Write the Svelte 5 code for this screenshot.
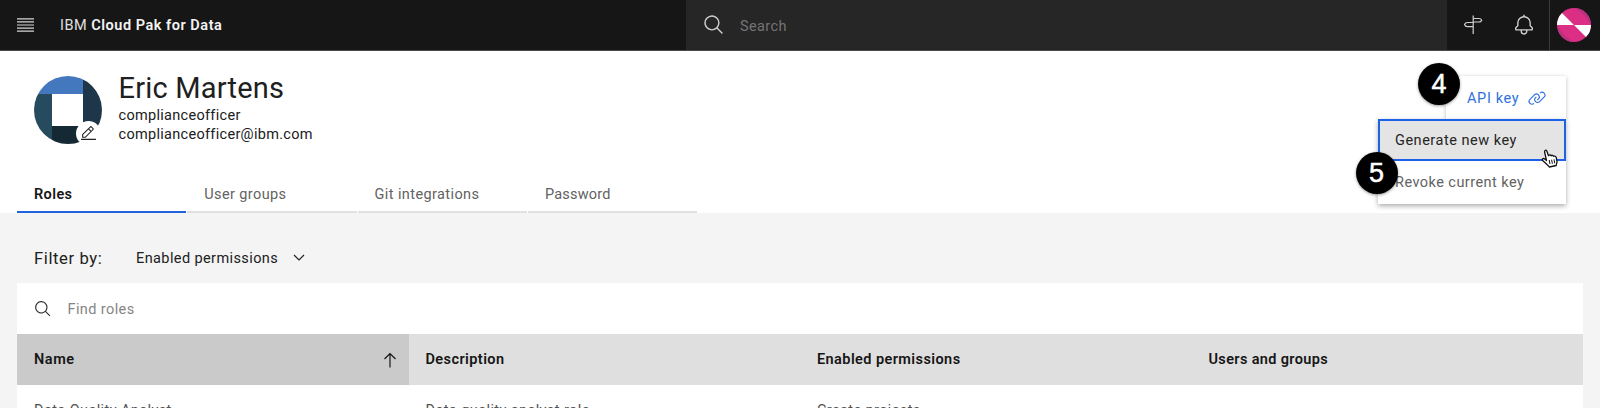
<script>
  const tabs = [
    { label: 'Roles', active: true, track: 0.4 },
    { label: 'User groups', track: 0.39 },
    { label: 'Git integrations', track: 0.4 },
    { label: 'Password', track: 0.22 }
  ];
  const columns = [
    { label: 'Name', cell: 'Data Quality Analyst', sorted: true, track: 0.55, cellTrack: 0.4 },
    { label: 'Description', cell: 'Data quality analyst role', track: 0.42, cellTrack: 0.4 },
    { label: 'Enabled permissions', cell: 'Create projects', track: 0.42, cellTrack: 0.38 },
    { label: 'Users and groups', cell: '', track: 0.35, cellTrack: 0 }
  ];
</script>

{#snippet searchIcon(size)}
  <svg width={size} height={size} viewBox="0 0 32 32" fill="currentColor"><path d="M29,27.5859l-7.5521-7.5521a11.0177,11.0177,0,1,0-1.4141,1.4141L27.5859,29ZM4,13a9,9,0,1,1,9,9A9.01,9.01,0,0,1,4,13Z" /></svg>
{/snippet}

<div class="page">
  <header>
    <div class="brand">
      <svg width="17" height="14" viewBox="0 0 17 14" stroke="#d6d6d6" stroke-width="1.2"><path d="M0 .8h17M0 3.9h17M0 7h17M0 10.1h17M0 13.2h17" /></svg>
      <span class="title">IBM <b>Cloud Pak for Data</b></span>
    </div>
    <div class="search">{@render searchIcon(22)}<span>Search</span></div>
    <div class="tool">
      <svg width="20" height="20" viewBox="0 0 20 20" fill="none" stroke="currentColor" stroke-width="1.200"><path d="M10.200 .5v18.500M10.200 3.500h5.800q2 0 2.700 1.700-.7 1.800-2.700 1.800h-5.800M10.200 7.500H4.500q-2.200 0-3 2 .8 2.200 3 2.200h5.700" /></svg>
    </div>
    <div class="tool">
      <svg width="22" height="22" viewBox="0 0 32 32" fill="currentColor"><path d="M28.7071,19.293,26,16.5859V13a10.0136,10.0136,0,0,0-9-9.9492V1H15V3.0508A10.0136,10.0136,0,0,0,6,13v3.5859L3.2929,19.293A1,1,0,0,0,3,20v3a1,1,0,0,0,1,1h7v.7768a5.152,5.152,0,0,0,4.5,5.1987A5.0057,5.0057,0,0,0,21,25V24h7a1,1,0,0,0,1-1V20A1,1,0,0,0,28.7071,19.293ZM19,25a3,3,0,0,1-6,0V24h6Zm8-3H5V20.4141L7.707,17.707A1,1,0,0,0,8,17V13a8,8,0,0,1,16,0v4a1,1,0,0,0,.293.707L27,20.4141Z" /></svg>
    </div>
    <div class="account">
      <svg width="34" height="34" viewBox="0 0 34 34"><circle cx="17" cy="17" r="17" fill="#da2f84" /><path d="M17 0A17 17 0 0 1 34 17Q27 4 17 0ZM0 17A17 17 0 0 0 17 34Q6 28 0 17Z" fill="#b83280" /><path d="M17 17H0A17 17 0 0 1 5 5ZM17 17H34A17 17 0 0 1 29 29Z" fill="#fff" /></svg>
    </div>
  </header>

  <section class="profile">
    <div class="person">
      <div class="avatar">
        <svg width="68" height="68" viewBox="0 0 68 68">
          <clipPath id="disc"><circle cx="34" cy="34" r="34" /></clipPath>
          <g clip-path="url(#disc)">
            <rect width="68" height="68" fill="#fff" />
            <rect width="49" height="18" fill="#4478be" />
            <rect y="18" width="18" height="50" fill="#264a5e" />
            <rect x="49" width="19" height="68" fill="#1e364a" />
            <rect x="18" y="50" width="31" height="18" fill="#152934" />
          </g>
        </svg>
        <span class="edit"><svg width="17" height="17" viewBox="0 0 32 32" fill="#222"><path d="M2 26h28v2H2zM25.4 9c.8-.8.8-2 0-2.800l-3.600-3.600c-.8-.8-2-.8-2.800 0l-15 15V24h6.400l15-15zM20.400 4L24 7.600l-3 3L17.400 7l3-3zM6 22v-3.600l10-10 3.600 3.600-10 10H6z" /></svg></span>
      </div>
      <div class="who">
        <h1>Eric Martens</h1>
        <p>complianceofficer</p>
        <p>complianceofficer@ibm.com</p>
      </div>
    </div>
    <nav>
      {#each tabs as tab}
        <span class="tab" class:active={tab.active} style="letter-spacing: {tab.track}px">{tab.label}</span>
      {/each}
    </nav>
  </section>

  <main>
    <div class="filter">
      <span class="by">Filter by:</span>
      <span class="pick">Enabled permissions</span>
      <svg width="12" height="8" viewBox="0 0 12 8" fill="none" stroke="#222" stroke-width="1.2"><path d="M1 1l5 5 5-5" /></svg>
    </div>
    <div class="table">
      <div class="find">{@render searchIcon(18)}<span>Find roles</span></div>
      <div class="row head">
        {#each columns as col}
          <span class:sorted={col.sorted} style="letter-spacing: {col.track}px">{col.label}
            {#if col.sorted}<svg width="14" height="16" viewBox="0 0 14 16" fill="none" stroke="#161616" stroke-width="1.2"><path d="M7 15.500V1.500M1.500 7L7 1.500 12.500 7" /></svg>{/if}
          </span>
        {/each}
      </div>
      <div class="row body">
        {#each columns as col}
          <span style="letter-spacing: {col.cellTrack}px">{col.cell}</span>
        {/each}
      </div>
    </div>
  </main>

  <div class="menu">
    <div class="api">
      <span>API key</span>
      <svg width="18" height="18" viewBox="0 0 32 32" fill="currentColor"><path d="M29.250 6.760a6 6 0 0 0-8.500 0l1.420 1.420a4 4 0 1 1 5.670 5.670l-8 8a4 4 0 1 1-5.670-5.660l1.410-1.420-1.410-1.420-1.420 1.420a6 6 0 0 0 0 8.500A6 6 0 0 0 17 25a6 6 0 0 0 4.270-1.760l8-8a6 6 0 0 0-.02-8.480z" /><path d="M4.190 24.820a4 4 0 0 1 0-5.670l8-8a4 4 0 0 1 5.670 0A3.940 3.940 0 0 1 19 14a4 4 0 0 1-1.170 2.850L15.710 19l1.420 1.420 2.120-2.120a6 6 0 0 0-8.510-8.510l-8 8a6 6 0 0 0 0 8.510A6 6 0 0 0 7 28a6.070 6.070 0 0 0 4.280-1.760l-1.420-1.420a4 4 0 0 1-5.670 0z" /></svg>
    </div>
    <div class="options">
      <span class="option focused">Generate new key</span>
      <span class="option">Revoke current key</span>
    </div>
  </div>
  <span class="step four">4</span>
  <span class="step five">5</span>
  <svg class="cursor" width="18" height="19" viewBox="0 0 18 19"><path d="M5.500 11.500L3.600 3C3.200 1.200 5.200.5 5.900 2.200L7.500 6.700C8 5.700 9.600 5.700 10 6.800 10.800 5.900 12.300 6.200 12.600 7.300 13.700 6.700 15 7.300 15.200 8.500L16 12.500C16.200 14 15.200 15 15.200 16.500L8.300 18C7.500 16.300 4 14 1.700 11.500 .5 10 2.300 8.800 3.700 10Z" fill="#fff" stroke="#111" stroke-width="1.300" stroke-linejoin="round" /><path d="M8.200 11l.8 4M10.600 10.700l.8 4M13 10.300l.7 4" stroke="#111" stroke-width="1" /></svg>
</div>

<style>
  :global(body) { margin: 0; overflow: hidden; }
  .page { position: relative; box-sizing: border-box; width: 1600px; height: 408px; overflow: hidden; background: #f4f4f4; color: #202020; font: 14.5px/19px Roboto, sans-serif; letter-spacing: 0.3px; }
  .page :global(svg) { display: block; flex: none; }
  header { box-sizing: border-box; display: flex; height: 51px; background: #161616; border-bottom: 1px solid #4a4a4a; color: #e0e0e0; }
  .brand { box-sizing: border-box; width: 686px; padding-left: 17px; display: flex; align-items: center; gap: 26px; }
  .title { letter-spacing: 0.52px; padding-top: 1px; }
  b { font-weight: 600; color: #f4f4f4; }
  .search { box-sizing: border-box; width: 761px; padding-left: 17px; display: flex; align-items: center; gap: 15px; background: #262626; }
  .search > :global(svg) { color: #d0d0d0; }
  .search span { color: #747474; letter-spacing: 0.38px; padding-top: 2px; }
  .tool { width: 51px; display: flex; align-items: center; justify-content: center; color: #d0d0d0; }
  .account { flex: 1; border-left: 1px solid #393939; display: flex; align-items: center; padding-left: 7px; }

  .profile { box-sizing: border-box; height: 162px; padding: 25px 17px 0; background: #fff; display: flex; flex-direction: column; }
  .person { display: flex; gap: 16.500px; padding-left: 17px; height: 94px; }
  .avatar { position: relative; width: 68px; height: 68px; }
  .edit { position: absolute; left: 42px; top: 45px; width: 25px; height: 25px; border-radius: 50%; background: #fff; display: flex; align-items: center; justify-content: center; }
  h1 { margin: 0; font-size: 29px; line-height: 24px; font-weight: 400; letter-spacing: 0.2px; padding-bottom: 6px; }
  p { margin: 0; line-height: 19px; }
  nav { display: flex; gap: 1px; height: 43px; }
  .tab { box-sizing: border-box; width: 169.300px; height: 43px; padding: 15px 17px 0; border-bottom: 2px solid #e0e0e0; color: #626262; }
  .tab.active { font-weight: 600; color: #161616; border-color: #2264dc; }

  main { padding: 0 17px; }
  .filter { box-sizing: border-box; height: 70px; padding: 20px 17px 0; display: flex; align-items: center; }
  .by { width: 102px; font-size: 16.600px; letter-spacing: 0.6px; padding-top: 1px; }
  .pick { width: 157px; letter-spacing: 0.4px; }
  .table { background: #fff; }
  .find { height: 51px; display: flex; align-items: center; gap: 15.500px; padding-left: 17px; color: #333; }
  .find span { color: #858585; letter-spacing: 0.4px; padding-top: 2px; }
  .row { display: grid; grid-template-columns: repeat(4, 1fr); height: 51px; }
  .row > span { display: flex; align-items: center; justify-content: space-between; padding: 0 12px 0 17px; }
  .head { background: #dfdfdf; font-weight: 600; color: #161616; }
  .sorted { background: #cacaca; }
  .body { color: #525252; }

  .menu { position: absolute; left: 1378px; top: 76px; width: 188px; display: flex; flex-direction: column; align-items: flex-end; }
  .api { box-sizing: border-box; width: 120px; height: 42.500px; padding: 2px 0 0 21px; display: flex; align-items: center; gap: 9px; background: #fff; color: #3070e0; box-shadow: 0 1px 4px #0004; letter-spacing: 0.65px; }
  .options { width: 188px; background: #fff; box-shadow: 0 2px 5px #0005; position: relative; }
  .option { box-sizing: border-box; display: flex; align-items: center; height: 42.500px; padding: 1px 0 0 17px; color: #626262; letter-spacing: 0.45px; }
  .option.focused { padding-left: 15px; color: #252525; background: #e4e4e4; border: 2px solid #1c62e6; letter-spacing: 0.52px; }
  .step { position: absolute; width: 42px; height: 42px; border-radius: 50%; background: #000; color: #fff; display: flex; align-items: center; justify-content: center; font: 27px/42px "Liberation Sans", Arial, sans-serif; letter-spacing: 0; -webkit-text-stroke: 0.5px #fff; box-shadow: 0 1px 3px #0006; }
  .four { left: 1418px; top: 63px; }
  .five { left: 1355.500px; top: 151.500px; }
  .cursor { position: absolute; left: 1541px; top: 149px; }
</style>
